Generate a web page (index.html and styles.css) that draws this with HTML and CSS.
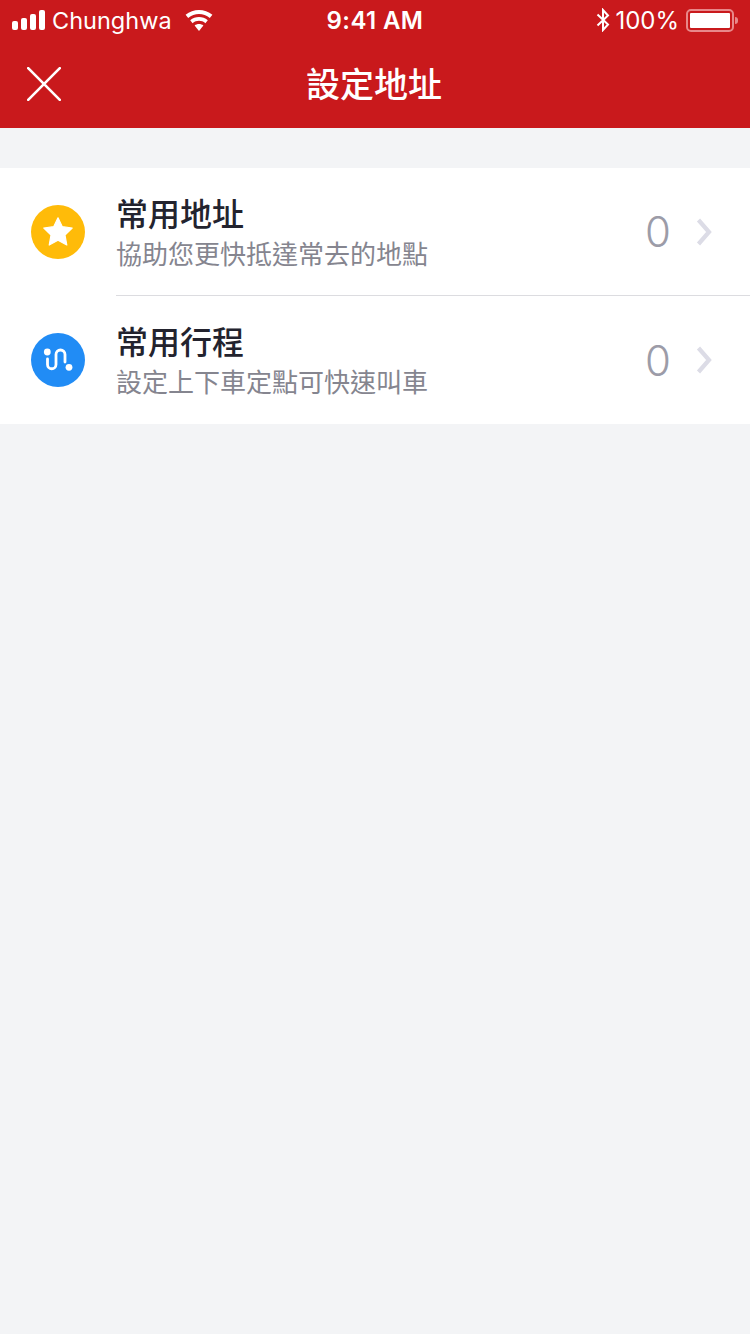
FILE: index.html
```html
<!-- index.html -->
<html>
  <head>
    <meta charset="UTF-8">
    <title>設定地址</title>
    <link rel="stylesheet" href="styles.css">
  </head>
  <body>
    <div class="header">
      <div class="status-bar">
        <div class="status-left">
          <div class="signal">
            <span class="bar bar-1"></span>
            <span class="bar bar-2"></span>
            <span class="bar bar-3"></span>
            <span class="bar bar-4"></span>
          </div>
          <span class="carrier">Chunghwa</span>
          <svg class="wifi" width="28" height="21" viewBox="0 0 28 21">
            <path d="M14 21 L9.6 15.6 C12 13.6 16 13.6 18.4 15.6 Z" fill="#fff"/>
            <path d="M7.6 13.2 L5.2 10.3 C10.2 6 17.8 6 22.8 10.3 L20.4 13.2 C16.6 10 11.4 10 7.6 13.2 Z" fill="#fff"/>
            <path d="M3.2 7.9 L0.6 4.8 C8.2 -1.6 19.8 -1.6 27.4 4.8 L24.8 7.9 C18.6 2.7 9.4 2.7 3.2 7.9 Z" fill="#fff"/>
          </svg>
        </div>
        <div class="status-time">9:41 AM</div>
        <div class="status-right">
          <svg class="bluetooth" width="14" height="24" viewBox="0 0 14 24">
            <path d="M1.5 6.5 L12 16.5 L7 22 L7 2 L12 7.5 L1.5 17.5" fill="none" stroke="#fff" stroke-width="2"/>
          </svg>
          <span class="battery-text">100%</span>
          <div class="battery"><div class="battery-fill"></div></div>
          <div class="battery-tip"></div>
        </div>
      </div>
      <div class="nav-bar">
        <svg class="close-icon" width="34" height="34" viewBox="0 0 34 34">
          <path d="M1.2 1.2 L32.8 32.8 M32.8 1.2 L1.2 32.8" fill="none" stroke="#fff" stroke-width="2.6" stroke-linecap="round"/>
        </svg>
        <h1>設定地址</h1>
      </div>
    </div>

    <div class="list">
      <div class="list-item">
        <div class="item-icon icon-yellow">
          <svg width="32" height="32" viewBox="0 0 32 32">
            <path d="M16 1.8 L20.3 10.7 L30.2 12 L23 19 L24.8 29 L16 24.2 L7.2 29 L9 19 L1.8 12 L11.7 10.7 Z" fill="#fff" stroke="#fff" stroke-width="1.2" stroke-linejoin="round"/>
          </svg>
        </div>
        <div class="item-body">
          <div class="item-text">
            <div class="item-title">常用地址</div>
            <div class="item-desc">協助您更快抵達常去的地點</div>
          </div>
          <div class="item-count">0</div>
          <svg class="chevron" width="16" height="28" viewBox="0 0 16 28">
            <path d="M2.5 2 L13 14 L2.5 26" fill="none" stroke="#dcdce6" stroke-width="4.2"/>
          </svg>
        </div>
      </div>
      <div class="list-item">
        <div class="item-icon icon-blue">
          <svg width="36" height="36" viewBox="0 0 36 36">
            <circle cx="7.3" cy="10" r="3.4" fill="#fff"/>
            <circle cx="29" cy="25.3" r="3.4" fill="#fff"/>
            <path d="M7.5 17 V22.5 A4.25 4.25 0 0 0 16 22.5 V12.5 A4.5 4.5 0 0 1 25 12.5 V20" fill="none" stroke="#fff" stroke-width="2.8" stroke-linecap="round"/>
          </svg>
        </div>
        <div class="item-body">
          <div class="item-text">
            <div class="item-title">常用行程</div>
            <div class="item-desc">設定上下車定點可快速叫車</div>
          </div>
          <div class="item-count">0</div>
          <svg class="chevron" width="16" height="28" viewBox="0 0 16 28">
            <path d="M2.5 2 L13 14 L2.5 26" fill="none" stroke="#dcdce6" stroke-width="4.2"/>
          </svg>
        </div>
      </div>
    </div>
  </body>
</html>
```

FILE: styles.css
```css
body {
  font-family: Inter, "Noto Sans CJK TC", sans-serif;
  background-color: #f3f4f6;
  margin: 0;
  padding: 0;
}
.header {
  background-color: #c9191c;
  color: white;
  height: 128px;
}
.status-bar {
  height: 40px;
  display: grid;
  grid-template-columns: 1fr auto 1fr;
  align-items: center;
  padding: 0 12px;
}
.status-left {
  display: flex;
  align-items: center;
}
.signal {
  display: flex;
  align-items: flex-end;
  gap: 3px;
  height: 20px;
}
.bar {
  width: 6px;
  background: white;
  border-radius: 2px;
}
.bar-1 { height: 9px; }
.bar-2 { height: 12px; }
.bar-3 { height: 16px; }
.bar-4 { height: 20px; }
.carrier {
  font-size: 23.5px;
  margin-left: 7px;
}
.wifi {
  margin-left: 13px;
}
.status-time {
  font-size: 24px;
  font-weight: 600;
  letter-spacing: 0.4px;
}
.status-right {
  display: flex;
  align-items: center;
  justify-content: flex-end;
}
.battery-text {
  font-size: 24px;
  margin-left: 5px;
}
.battery {
  width: 48px;
  height: 23px;
  box-sizing: border-box;
  border: 2px solid #e8888a;
  border-radius: 5px;
  padding: 2px;
  margin-left: 7px;
}
.battery-fill {
  height: 100%;
  background: white;
  border-radius: 1px;
}
.battery-tip {
  width: 3px;
  height: 7px;
  background: #e8888a;
  margin-left: 1px;
  border-radius: 0 3px 3px 0;
}
.nav-bar {
  height: 88px;
  box-sizing: border-box;
  padding: 0 2px 4px 0;
  position: relative;
  display: flex;
  align-items: center;
  justify-content: center;
}
.nav-bar h1 {
  margin: 0;
  font-size: 34px;
  font-weight: 500;
}
.close-icon {
  position: absolute;
  left: 27px;
  top: 27px;
}
.list {
  margin-top: 40px;
  background: white;
}
.list-item {
  height: 128px;
  display: flex;
  align-items: center;
}
.item-icon {
  width: 54px;
  height: 54px;
  margin-left: 31px;
  border-radius: 50%;
  flex-shrink: 0;
  display: flex;
  align-items: center;
  justify-content: center;
}
.icon-yellow {
  background: #ffbb09;
}
.icon-blue {
  background: #218cf5;
}
.item-body {
  flex: 1;
  height: 100%;
  margin-left: 31px;
  display: flex;
  align-items: center;
  box-sizing: border-box;
  padding-right: 38px;
}
.list-item:first-child .item-body {
  border-bottom: 1px solid #dcdce0;
}
.item-text {
  flex: 1;
  padding-top: 3px;
}
.item-title {
  font-size: 32px;
  font-weight: 500;
  line-height: 40px;
  color: #23232e;
}
.item-desc {
  font-size: 26px;
  line-height: 34px;
  margin-top: 3px;
  color: #85858f;
}
.item-count {
  font-size: 42px;
  font-weight: 300;
  color: #9c9ca8;
  margin-right: 25px;
}
```
